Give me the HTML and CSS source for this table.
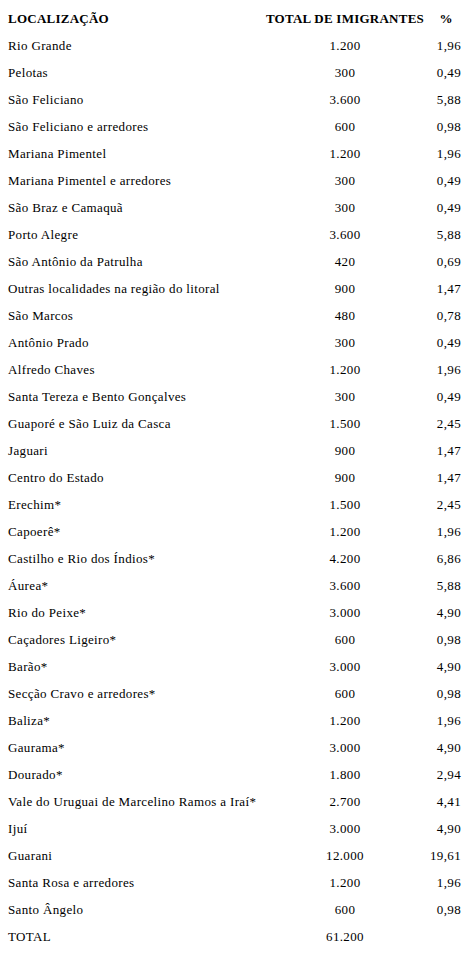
FILE: index.html
```html
<!DOCTYPE html>
<html lang="pt">
<head>
<meta charset="utf-8">
<link rel="stylesheet" href="styles.css">
</head>
<body>
<table class="tbl">
<thead>
<tr><th class="loc">LOCALIZAÇÃO</th><th class="tot">TOTAL DE IMIGRANTES</th><th class="pct">%</th></tr>
</thead>
<tbody>
<tr><td class="loc">Rio Grande</td><td class="tot">1.200</td><td class="pct">1,96</td></tr>
<tr><td class="loc">Pelotas</td><td class="tot">300</td><td class="pct">0,49</td></tr>
<tr><td class="loc">São Feliciano</td><td class="tot">3.600</td><td class="pct">5,88</td></tr>
<tr><td class="loc">São Feliciano e arredores</td><td class="tot">600</td><td class="pct">0,98</td></tr>
<tr><td class="loc">Mariana Pimentel</td><td class="tot">1.200</td><td class="pct">1,96</td></tr>
<tr><td class="loc">Mariana Pimentel e arredores</td><td class="tot">300</td><td class="pct">0,49</td></tr>
<tr><td class="loc">São Braz e Camaquã</td><td class="tot">300</td><td class="pct">0,49</td></tr>
<tr><td class="loc">Porto Alegre</td><td class="tot">3.600</td><td class="pct">5,88</td></tr>
<tr><td class="loc">São Antônio da Patrulha</td><td class="tot">420</td><td class="pct">0,69</td></tr>
<tr><td class="loc">Outras localidades na região do litoral</td><td class="tot">900</td><td class="pct">1,47</td></tr>
<tr><td class="loc">São Marcos</td><td class="tot">480</td><td class="pct">0,78</td></tr>
<tr><td class="loc">Antônio Prado</td><td class="tot">300</td><td class="pct">0,49</td></tr>
<tr><td class="loc">Alfredo Chaves</td><td class="tot">1.200</td><td class="pct">1,96</td></tr>
<tr><td class="loc">Santa Tereza e Bento Gonçalves</td><td class="tot">300</td><td class="pct">0,49</td></tr>
<tr><td class="loc">Guaporé e São Luiz da Casca</td><td class="tot">1.500</td><td class="pct">2,45</td></tr>
<tr><td class="loc">Jaguari</td><td class="tot">900</td><td class="pct">1,47</td></tr>
<tr><td class="loc">Centro do Estado</td><td class="tot">900</td><td class="pct">1,47</td></tr>
<tr><td class="loc">Erechim*</td><td class="tot">1.500</td><td class="pct">2,45</td></tr>
<tr><td class="loc">Capoerê*</td><td class="tot">1.200</td><td class="pct">1,96</td></tr>
<tr><td class="loc">Castilho e Rio dos Índios*</td><td class="tot">4.200</td><td class="pct">6,86</td></tr>
<tr><td class="loc">Áurea*</td><td class="tot">3.600</td><td class="pct">5,88</td></tr>
<tr><td class="loc">Rio do Peixe*</td><td class="tot">3.000</td><td class="pct">4,90</td></tr>
<tr><td class="loc">Caçadores Ligeiro*</td><td class="tot">600</td><td class="pct">0,98</td></tr>
<tr><td class="loc">Barão*</td><td class="tot">3.000</td><td class="pct">4,90</td></tr>
<tr><td class="loc">Secção Cravo e arredores*</td><td class="tot">600</td><td class="pct">0,98</td></tr>
<tr><td class="loc">Baliza*</td><td class="tot">1.200</td><td class="pct">1,96</td></tr>
<tr><td class="loc">Gaurama*</td><td class="tot">3.000</td><td class="pct">4,90</td></tr>
<tr><td class="loc">Dourado*</td><td class="tot">1.800</td><td class="pct">2,94</td></tr>
<tr><td class="loc">Vale do Uruguai de Marcelino Ramos a Iraí*</td><td class="tot">2.700</td><td class="pct">4,41</td></tr>
<tr><td class="loc">Ijuí</td><td class="tot">3.000</td><td class="pct">4,90</td></tr>
<tr><td class="loc">Guarani</td><td class="tot">12.000</td><td class="pct">19,61</td></tr>
<tr><td class="loc">Santa Rosa e arredores</td><td class="tot">1.200</td><td class="pct">1,96</td></tr>
<tr><td class="loc">Santo Ângelo</td><td class="tot">600</td><td class="pct">0,98</td></tr>
<tr><td class="loc">TOTAL</td><td class="tot">61.200</td><td class="pct"></td></tr>
</tbody>
</table>
</body>
</html>
```

FILE: styles.css
```css
html, body {
  margin: 0;
  padding: 0;
  background: #ffffff;
}
body {
  font-family: "Liberation Serif", "Times New Roman", serif;
  font-size: 13px;
  color: #000000;
  padding: 5px 0 0 8px;
}
.tbl {
  border-collapse: collapse;
  table-layout: fixed;
  width: 456px;
}
.tbl th, .tbl td {
  height: 27px;
  padding: 0;
  vertical-align: middle;
  white-space: nowrap;
  line-height: 15px;
}
.tbl td {
  letter-spacing: 0.35px;
}
.tbl th {
  font-weight: bold;
  letter-spacing: 0.25px;
}
.tbl .loc {
  width: 254px;
  text-align: left;
}
.tbl .tot {
  width: 166px;
  text-align: center;
}
.tbl .pct {
  width: 36px;
  text-align: right;
  padding-right: 3px;
}
.tbl th.pct {
  text-align: center;
  padding-right: 0;
}
```
